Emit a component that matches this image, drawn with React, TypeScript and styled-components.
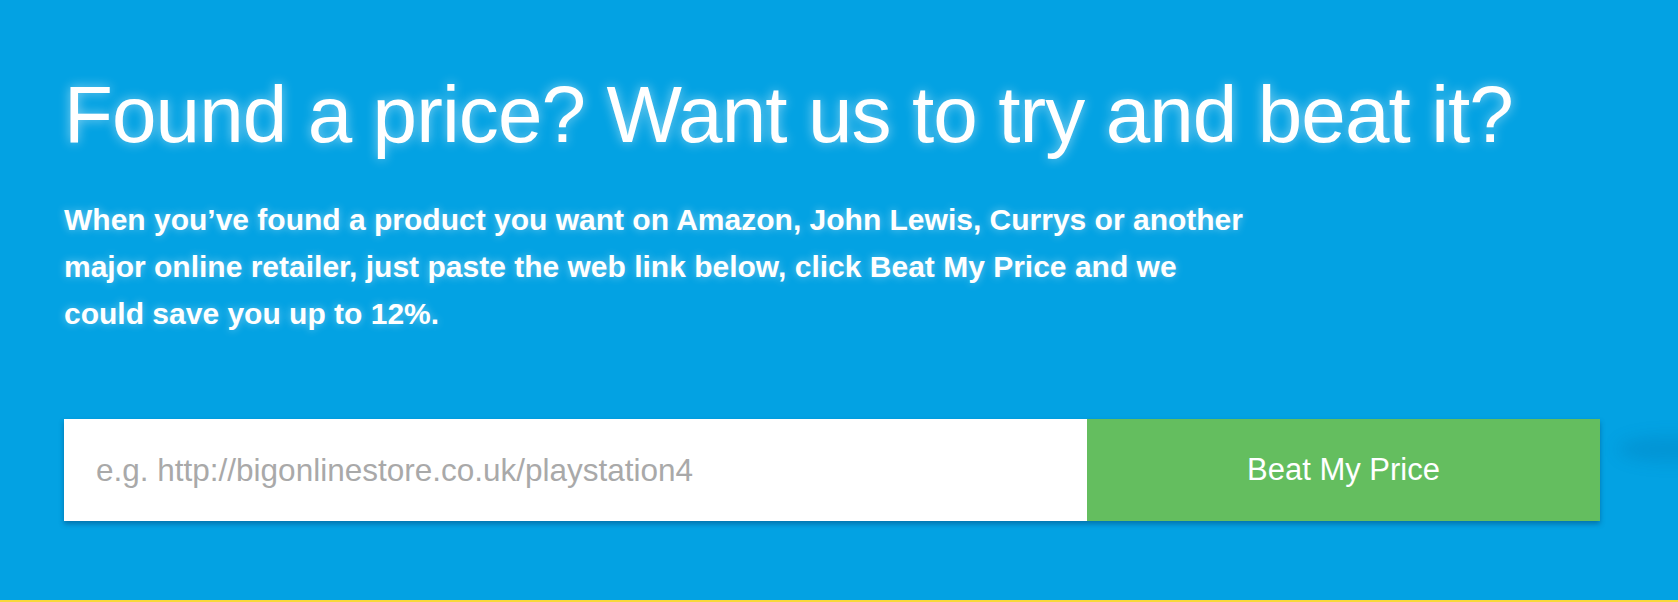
import { createGlobalStyle, styled } from "styled-components";

const GlobalStyle = createGlobalStyle`
  html, body {
    margin: 0;
    padding: 0;
    background: #03a2e3;
  }
  * {
    box-sizing: border-box;
  }
`;

const Hero = styled.section`
  position: relative;
  height: 602px;
  overflow: hidden;
  background-color: #03a2e3;
  border-bottom: 2px solid #f8d83a;
  padding: 75px 0 0 64px;
  font-family: "Liberation Sans", Arial, sans-serif;
  color: #fff;
`;

const Title = styled.h1`
  margin: 0;
  font-size: 80px;
  line-height: 80px;
  font-weight: 400;
  letter-spacing: -0.9px;
  text-shadow: 0 0 12px rgba(255, 255, 255, 0.55);
`;

const Intro = styled.p`
  margin: 41px 0 0 0;
  max-width: 1200px;
  font-size: 30px;
  line-height: 47px;
  font-weight: 700;
  letter-spacing: 0;
  text-shadow: 0 0 8px rgba(255, 255, 255, 0.45);
`;

const Form = styled.form`
  display: flex;
  width: 1536px;
  height: 102px;
  margin-top: 82px;
  box-shadow: 0 3px 5px rgba(0, 60, 110, 0.45);
`;

const UrlInput = styled.input`
  flex: 0 0 1023px;
  height: 100%;
  border: none;
  outline: none;
  padding: 0 0 0 32px;
  background: #fff;
  font-family: "Liberation Sans", Arial, sans-serif;
  font-size: 31.5px;
  color: #555;

  &::placeholder {
    color: #a9a9a9;
  }
`;

const SubmitButton = styled.button`
  flex: 1;
  height: 100%;
  border: none;
  background: #64be5f;
  color: #fff;
  font-family: "Liberation Sans", Arial, sans-serif;
  font-size: 31px;
  font-weight: 400;
  cursor: pointer;
`;

const EdgeShade = styled.div`
  position: absolute;
  right: -40px;
  top: 436px;
  width: 100px;
  height: 26px;
  border-radius: 50%;
  background: rgba(0, 70, 130, 0.14);
  filter: blur(8px);
`;

export default function App() {
  return (
    <>
      <GlobalStyle />
      <Hero>
        <Title>Found a price? Want us to try and beat it?</Title>
        <Intro>
          When you’ve found a product you want on Amazon, John Lewis, Currys or another major
          online retailer, just paste the web link below, click Beat My Price and we could save
          you up to 12%.
        </Intro>
        <Form onSubmit={(e) => e.preventDefault()}>
          <UrlInput type="text" placeholder="e.g. http://bigonlinestore.co.uk/playstation4" />
          <SubmitButton type="submit">Beat My Price</SubmitButton>
        </Form>
        <EdgeShade />
      </Hero>
    </>
  );
}
